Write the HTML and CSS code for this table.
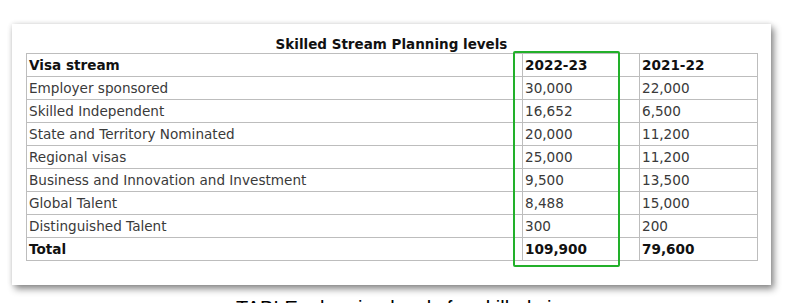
FILE: index.html
```html
<!DOCTYPE html>
<html>
<head>
<meta charset="utf-8">
<link rel="stylesheet" href="styles.css">
</head>
<body>
<div class="card">
  <div class="title">Skilled Stream Planning levels</div>
  <div class="table-wrap">
    <table class="plan">
      <colgroup><col class="c1"><col class="c2"><col class="c3"></colgroup>
      <tr class="head"><th>Visa stream</th><th>2022-23</th><th>2021-22</th></tr>
      <tr><td>Employer sponsored</td><td>30,000</td><td>22,000</td></tr>
      <tr><td>Skilled Independent</td><td>16,652</td><td>6,500</td></tr>
      <tr><td>State and Territory Nominated</td><td>20,000</td><td>11,200</td></tr>
      <tr><td>Regional visas</td><td>25,000</td><td>11,200</td></tr>
      <tr><td>Business and Innovation and Investment</td><td>9,500</td><td>13,500</td></tr>
      <tr><td>Global Talent</td><td>8,488</td><td>15,000</td></tr>
      <tr><td>Distinguished Talent</td><td>300</td><td>200</td></tr>
      <tr class="total"><th>Total</th><th>109,900</th><th>79,600</th></tr>
    </table>
    <div class="highlight"></div>
  </div>
</div>
<div class="caption">TABLE: planning levels for skilled visas</div>
</body>
</html>
```
FILE: styles.css
```css
html, body {
  margin: 0;
  padding: 0;
  background: #fff;
  width: 802px;
  height: 303px;
  overflow: hidden;
}
.card {
  margin: 24px 0 0 12px;
  width: 759px;
  height: 261px;
  box-sizing: border-box;
  padding: 11px 0 0 14px;
  background: #fff;
  box-shadow: 3px 4px 7px rgba(0,0,0,0.45), 0 0 5px rgba(0,0,0,0.12);
  font-family: "DejaVu Sans", Verdana, sans-serif;
}
.title {
  width: 731px;
  text-align: center;
  font-weight: bold;
  font-size: 13.5px;
  line-height: 18px;
  color: #111;
}
.table-wrap {
  position: relative;
  width: 731px;
}
.plan {
  border-collapse: collapse;
  width: 731px;
  table-layout: fixed;
  font-size: 13.6px;
  color: #3a3a3a;
}
.c1 { width: 496px; }
.c2 { width: 117px; }
.c3 { width: 118px; }
.plan th, .plan td {
  border: 1px solid #bdbdbd;
  height: 22px;
  padding: 0 2px;
  text-align: left;
  line-height: 22px;
  white-space: nowrap;
}
.plan th {
  font-weight: bold;
  color: #111;
}
.highlight {
  position: absolute;
  left: 487px;
  top: -2px;
  width: 103px;
  height: 212px;
  border: 2px solid #22b02a;
  border-radius: 2px;
}
.caption {
  margin: 13px 0 0 236px;
  font-family: "Liberation Sans", Arial, sans-serif;
  font-size: 20px;
  line-height: 20px;
  color: #000;
}
```
